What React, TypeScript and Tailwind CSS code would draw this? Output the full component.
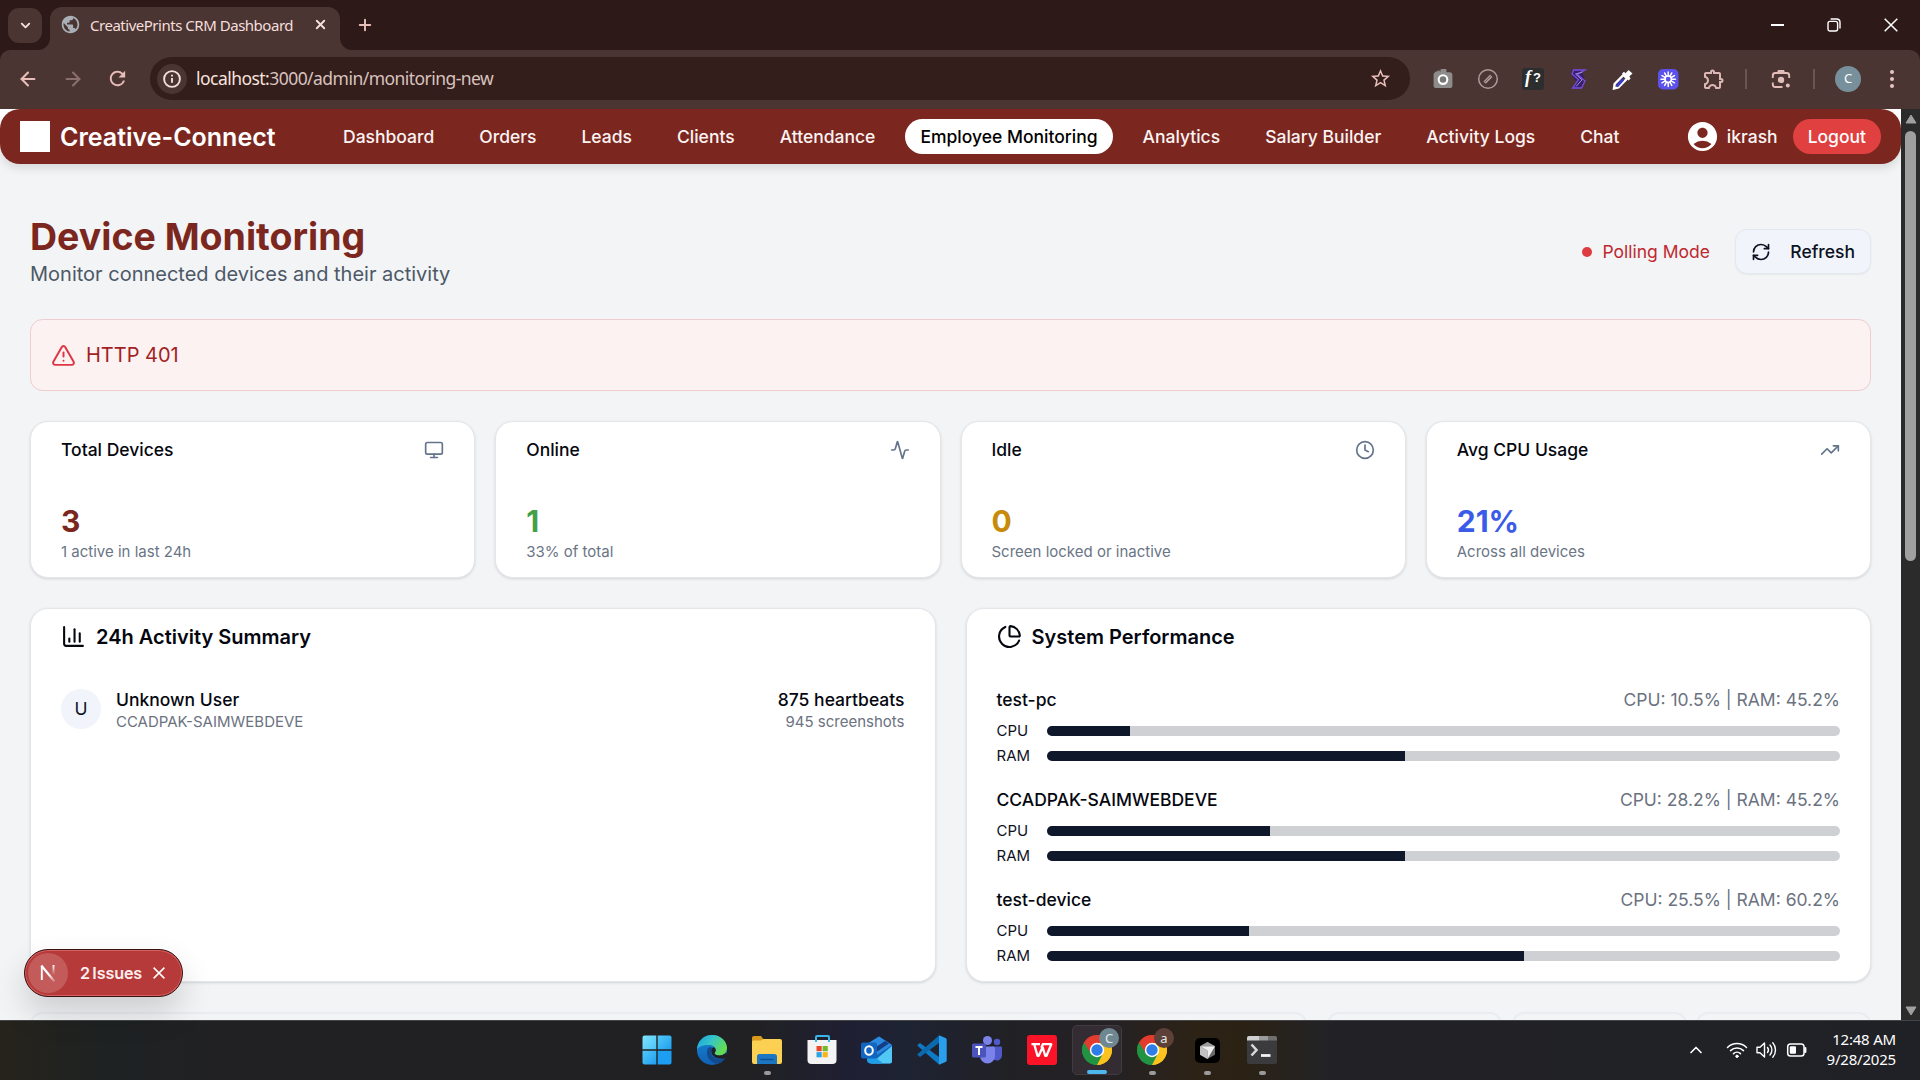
import React from "react";
import {
  Activity,
  ArrowLeft,
  ArrowRight,
  ChartColumn,
  ChartPie,
  ChevronDown,
  ChevronUp,
  Clock,
  Monitor,
  Plus,
  RefreshCw,
  TrendingUp,
  TriangleAlert,
  X,
} from "lucide-react";
import { MdAccountCircle, MdPublic, MdRefresh, MdStarBorder, MdOutlineExtension } from "react-icons/md";

const UI = "font-['Noto_Sans','Open_Sans',sans-serif]";

function TabStrip() {
  return (
    <div className="flex h-[50px] shrink-0 items-end bg-[#2d1a18]">
      <div className="mb-[7px] ml-2 flex h-[35px] w-[34px] items-center justify-center rounded-[11px] bg-[#4a3533]">
        <ChevronDown size={15} strokeWidth={3} className="text-[#f5dedb]" />
      </div>
      <div className="relative ml-2 flex h-[43px] w-[290px] items-center rounded-t-[12px] bg-[#4a3533] pb-[8px] pl-[10px] pr-[12px]">
        <svg className="absolute -left-3 bottom-0" width="12" height="12" viewBox="0 0 12 12">
          <path d="M12 0v12H0A12 12 0 0 0 12 0Z" fill="#4a3533" />
        </svg>
        <svg className="absolute -right-3 bottom-0" width="12" height="12" viewBox="0 0 12 12">
          <path d="M0 0v12h12A12 12 0 0 1 0 0Z" fill="#4a3533" />
        </svg>
        <MdPublic size={21} className="shrink-0 text-[#a9b0b5]" />
        <span className={`ml-[9px] flex-1 whitespace-nowrap pt-px text-[15px] tracking-[-0.48px] text-[#f5dedb] ${UI}`}>
          CreativePrints CRM Dashboard
        </span>
        <X size={15} strokeWidth={3} className="text-[#f5dedb]" />
      </div>
      <Plus size={18} strokeWidth={2.6} className="mb-4 ml-[16px] text-[#e7bdb8]" />
      <div className="mb-[18px] ml-auto mr-[22px] flex items-center gap-[43px]">
        <span className="h-[1.5px] w-[13px] bg-white" />
        <svg width="14" height="14" viewBox="0 0 14 14" fill="none" stroke="#fff" strokeWidth="1.4">
          <rect x="1" y="3.4" width="9.6" height="9.6" rx="2" />
          <path d="M3.6 1h6a3.4 3.4 0 0 1 3.4 3.4v6" />
        </svg>
        <svg width="14" height="14" viewBox="0 0 14 14" stroke="#fff" strokeWidth="1.5">
          <path d="M.7.7l12.6 12.6M13.3.7.7 13.3" />
        </svg>
      </div>
    </div>
  );
}

function Toolbar() {
  return (
    <div className="flex h-[59px] shrink-0 items-center bg-[#2d1a18]">
      <div className="flex h-full w-full items-center rounded-t-[10px] bg-[#4a3533] pb-[2px]">
        <ArrowLeft size={22} strokeWidth={2.3} className="ml-[17px] text-[#e7bdb8]" />
        <ArrowRight size={22} strokeWidth={2.3} className="ml-[23px] text-[#8b6f6c]" />
        <MdRefresh size={23} className="ml-[22px] text-[#e7bdb8]" />
        <div className="ml-[21px] flex h-[43px] w-[1260px] items-center rounded-full bg-[#331e1b] pl-[7px] pr-[18px]">
          <div className="flex size-[30px] items-center justify-center rounded-full bg-[#4a3533]">
            <svg width="18" height="18" viewBox="0 0 18 18" fill="none" stroke="#f5dedb" strokeWidth="1.9">
              <circle cx="9" cy="9" r="7.9" />
              <path d="M9 8v4.8M9 4.7v1.9" />
            </svg>
          </div>
          <span className={`ml-[9px] flex-1 text-[17.5px] tracking-[-0.54px] text-[#d9c2bf] ${UI}`}>
            <span className="text-[#f8e2df]">localhost:</span>3000/admin/monitoring-new
          </span>
          <MdStarBorder size={23} className="text-[#e7bdb8]" />
        </div>
        <Extensions />
      </div>
    </div>
  );
}

function Extensions() {
  const rays = Array.from({ length: 12 }, (_, i) => i * 30);
  return (
    <div className="ml-[22px] flex items-center">
      <div className="flex items-center gap-[23px]">
        <svg width="22" height="22" viewBox="0 0 22 22">
          <path d="M3.5 3.6h2v-1h2.2v1h.8V2a1 1 0 0 1 1-1h4a1 1 0 0 1 1 1v2.2H18A2.6 2.6 0 0 1 20.4 6.8V18A2 2 0 0 1 18.4 20H3.6A2 2 0 0 1 1.6 18V6Z" fill="#8e8c8b" />
          <circle cx="11" cy="11.600" r="4.300" fill="#777" stroke="#fff" strokeWidth="2.100" />
        </svg>
        <svg width="22" height="22" viewBox="0 0 22 22" fill="none">
          <circle cx="11" cy="11" r="9.300" stroke="#ab9a98" strokeWidth="1.500" />
          <path d="M7.600 14.600 14.300 7.700" stroke="#ab9a98" strokeWidth="3.400" />
          <path d="m8 14 5.800-6" stroke="#6b5654" strokeWidth=".9" />
        </svg>
        <span className="flex size-[22px] items-center justify-center rounded-[3px] bg-[#2c2d2f] pb-0.5 font-['Liberation_Serif',serif] text-[18px] font-bold italic text-white">
          f<span className="pl-0.5 font-['Liberation_Sans',sans-serif] text-[13px] not-italic">?</span>
        </span>
        <svg width="22" height="22" viewBox="0 0 22 22" fill="none">
          <path d="M4.500 1.500H18L15.500 5l2 6-3 9.500H4L9.500 14 4.500 7Z" fill="#35206b" />
          <path d="M18 2H6.500L5 6l6.500 5.500L5.500 20h9l3.500-7-7.500-6.500L18 2Z" stroke="#7a4ddb" strokeWidth="1.300" />
          <path d="M15.500 4 8.500 6l6.500 5.800-6 6.700" stroke="#a78be8" strokeWidth="1" />
        </svg>
        <svg width="22" height="22" viewBox="0 0 22 22" fill="none">
          <path d="m11.500 7 3.600 3.600L6.300 19.500 2 20.500 2.600 16Z" fill="#4a3533" stroke="#fff" strokeWidth="2.400" />
          <path d="m10.500 12-5 5.500" stroke="#3b3cc4" strokeWidth="3" strokeLinecap="round" />
          <path d="M10 5.500 12 3.800l1.600 1.400L16.500 2l4 3.600-3.200 3 1.300 1.800-2 2Z" fill="#fff" />
        </svg>
        <svg width="22" height="22" viewBox="0 0 22 22" stroke="#fff" strokeWidth="1.500">
          <rect x="1" y="1" width="20.500" height="20.500" rx="5" fill="#5c51ea" stroke="none" />
          {rays.map((a) => (
            <path key={a} d="M11.200 7.800V4" transform={`rotate(${a} 11.200 11.200)`} strokeLinecap="round" />
          ))}
          <circle cx="11.200" cy="11.200" r="3.200" fill="none" />
        </svg>
        <MdOutlineExtension size={24} className="text-[#dcb8b4]" />
      </div>
      <span className="ml-[19px] h-5 w-[2px] bg-[#6c5451]" />
      <svg className="ml-[23px]" width="22" height="22" viewBox="0 0 22 22" fill="none" stroke="#e3beb9" strokeWidth="1.900">
        <path d="M2.800 10V7.500a2.500 2.500 0 0 1 2.500-2.500h11.400a2.500 2.500 0 0 1 2.500 2.500V10M2.800 14.500v2A2.500 2.500 0 0 0 5.300 19H12.500" />
        <path d="M7 4.500 8 2h6l1 2.500Z" fill="#e3beb9" stroke="none" />
        <circle cx="11" cy="11.900" r="3.200" fill="#e3beb9" stroke="none" />
        <circle cx="17.800" cy="17.600" r="2" fill="#e3beb9" stroke="none" />
      </svg>
      <span className="ml-[21px] h-5 w-[2px] bg-[#6c5451]" />
      <span className={`ml-[20px] flex size-[26px] items-center justify-center rounded-full bg-[#78909c] text-[13px] text-white ${UI}`}>C</span>
      <span className="ml-[29px] flex flex-col gap-[3px]">
        <i className="size-[4px] rounded-full bg-[#e7c6c2]" />
        <i className="size-[4px] rounded-full bg-[#e7c6c2]" />
        <i className="size-[4px] rounded-full bg-[#e7c6c2]" />
      </span>
    </div>
  );
}

const NAV = ["Dashboard", "Orders", "Leads", "Clients", "Attendance", "Employee Monitoring", "Analytics", "Salary Builder", "Activity Logs", "Chat"];

function NavBar() {
  return (
    <div className="shrink-0 bg-gradient-to-b from-white from-30% to-transparent to-30%">
      <nav className="flex h-[55px] items-center rounded-[20px] bg-[#7b2720] pl-5 pr-5 text-[17.5px] font-medium text-white shadow-[0_5px_8px_rgba(0,0,0,0.1)]">
        <span className="h-[31px] w-[30px] bg-white" />
        <span className="ml-[10px] w-[216px] whitespace-nowrap pt-[2px] text-[25px] font-semibold">Creative-Connect</span>
        <div className="ml-[52px] flex gap-[15px]">
          {NAV.map((n) => (
            <span
              key={n}
              className={
                n === "Employee Monitoring"
                  ? "flex h-[35px] items-center whitespace-nowrap rounded-full bg-white px-[15px] pt-[2px] text-black"
                  : "flex h-[35px] items-center whitespace-nowrap px-[15px] pt-[2px] text-[#fbf3f2]"
              }
            >
              {n}
            </span>
          ))}
        </div>
        <MdAccountCircle size={35} className="-mr-0.5 ml-auto" />
        <span className="ml-[9px] pt-[2px] text-[#fbf3f2]">ikrash</span>
        <span className="ml-[15px] flex h-[35px] items-center rounded-full bg-[#e04040] px-[15px] pt-[2px]">Logout</span>
      </nav>
    </div>
  );
}

const STATS = [
  { title: "Total Devices", value: "3", note: "1 active in last 24h", Icon: Monitor, color: "text-[#7b2720]" },
  { title: "Online", value: "1", note: "33% of total", Icon: Activity, color: "text-[#43a047]" },
  { title: "Idle", value: "0", note: "Screen locked or inactive", Icon: Clock, color: "text-[#c88a0a]" },
  { title: "Avg CPU Usage", value: "21%", note: "Across all devices", Icon: TrendingUp, color: "text-[#3a5be8]" },
];

const CARD = "rounded-[18px] border border-[#e4e6ea] bg-white shadow-[0_1px_3px_rgba(0,0,0,0.13)]";

const DEVICES = [
  { name: "test-pc", cpu: 10.5, ram: 45.2 },
  { name: "CCADPAK-SAIMWEBDEVE", cpu: 28.2, ram: 45.2 },
  { name: "test-device", cpu: 25.5, ram: 60.2 },
];

function Meter({ label, value }: { label: string; value: number }) {
  return (
    <div className="flex h-5 items-center">
      <span className="w-[50px] pt-px text-[15px] text-[#10131f]">{label}</span>
      <div className="h-[10px] flex-1 overflow-hidden rounded-full bg-[#ced0d4]">
        <div className="h-full bg-[#0f172a]" style={{ width: `${value}%` }} />
      </div>
    </div>
  );
}

function Page() {
  return (
    <div className="flex min-w-0 flex-1 flex-col overflow-hidden bg-[#f2f4f6]">
      <NavBar />
      <main className="px-[30px] pt-[50px]">
        <div className="flex items-center justify-between">
          <div>
            <h1 className="text-[37.5px] font-bold leading-[45px] text-[#7b2720]">Device Monitoring</h1>
            <p className="text-[20px] leading-[30px] text-[#4d5866]">Monitor connected devices and their activity</p>
          </div>
          <div className="flex items-center">
            <span className="size-[10px] rounded-full bg-[#dd3c40]" />
            <span className="ml-[10px] pt-[2px] text-[17.5px] text-[#c0282f]">Polling Mode</span>
            <span className="ml-[25px] flex h-[45px] w-[136px] items-center justify-between rounded-[12px] border border-[#e3e8ef] bg-[#f1f5fb] px-[15px] text-[17.5px] font-medium text-[#0c1222] shadow-[0_1px_2px_rgba(0,0,0,0.05)]">
              <RefreshCw size={20} />
              <span className="pt-[2px]">Refresh</span>
            </span>
          </div>
        </div>

        <div className="mt-[30px] flex h-[72px] items-center rounded-[12.5px] border border-[#eecdd0] bg-[#fbf2f1] pl-5">
          <TriangleAlert size={25} strokeWidth={1.9} className="text-[#e03544]" />
          <span className="ml-[10px] text-[20px] text-[#a31f24]">HTTP 401</span>
        </div>

        <div className="mt-[30px] grid grid-cols-4 gap-5">
          {STATS.map(({ title, value, note, Icon, color }) => (
            <div key={title} className={`h-[157px] px-[30px] pt-[15px] ${CARD}`}>
              <div className="flex h-[25px] items-center justify-between">
                <span className="pt-[2px] text-[17.5px] font-medium text-[#05070f]">{title}</span>
                <Icon size={20} className="text-[#64748b]" />
              </div>
              <div className={`mt-[39px] text-[30px] font-bold leading-10 ${color}`}>{value}</div>
              <div className="mt-px text-[15px] leading-5 text-[#6a7585]">{note}</div>
            </div>
          ))}
        </div>

        <div className="mt-[30px] grid grid-cols-2 gap-[30px]">
          <section className={`h-[374px] px-[30px] pt-[15px] ${CARD}`}>
            <h2 className="flex h-[25px] items-center gap-[10px] text-[20px] font-semibold text-[#05070f]">
              <ChartColumn size={25} />
              24h Activity Summary
            </h2>
            <div className="mt-[37px] flex h-[45px] items-center">
              <span className="flex size-10 items-center justify-center rounded-full bg-[#f1f4fa] pt-[2px] text-[17.5px] text-[#0c1222]">U</span>
              <div className="ml-[15px] mt-[2px]">
                <div className="text-[17.5px] font-medium leading-[25px] text-[#05070f]">Unknown User</div>
                <div className="text-[15px] leading-5 text-[#6b7280]">CCADPAK-SAIMWEBDEVE</div>
              </div>
              <div className="ml-auto mt-[2px] text-right">
                <div className="text-[17.5px] font-medium leading-[25px] text-[#05070f]">875 heartbeats</div>
                <div className="text-[15px] leading-5 text-[#6b7280]">945 screenshots</div>
              </div>
            </div>
          </section>
          <section className={`h-[374px] px-[30px] pt-[15px] ${CARD}`}>
            <h2 className="flex h-[25px] items-center gap-[10px] text-[20px] font-semibold text-[#05070f]">
              <ChartPie size={25} />
              System Performance
            </h2>
            <div className="mt-[38px] flex flex-col gap-5">
              {DEVICES.map((d) => (
                <div key={d.name} className="flex h-20 flex-col">
                  <div className="mb-[9px] flex h-[25px] items-center justify-between pt-px text-[17.5px]">
                    <span className="font-medium text-[#05070f]">{d.name}</span>
                    <span className="text-[#6b7280]">
                      CPU: {d.cpu}% | RAM: {d.ram}%
                    </span>
                  </div>
                  <div className="flex flex-col gap-[5px]">
                    <Meter label="CPU" value={d.cpu} />
                    <Meter label="RAM" value={d.ram} />
                  </div>
                </div>
              ))}
            </div>
          </section>
        </div>

        <div className="mt-[30px] flex">
          <div className="h-[50px] w-[1277px] rounded-[12px] border-2 border-[#e9ecf0]" />
          <div className="ml-5 h-[50px] w-[175px] rounded-[12px] border-2 border-[#e9ecf0]" />
          <div className="ml-[10px] h-[50px] w-[175px] rounded-[12px] border-2 border-[#e9ecf0]" />
          <div className="ml-[9px] h-[50px] w-[175px] rounded-[12px] border-2 border-[#e9ecf0]" />
        </div>
      </main>
    </div>
  );
}

function ScrollBar() {
  return (
    <div className="flex w-[19px] shrink-0 flex-col items-center bg-[#2b2b2b]">
      <svg className="mt-[5px]" width="12" height="10" viewBox="0 0 12 10">
        <path d="M6 1 11 9H1Z" fill="#a0a0a0" stroke="#a0a0a0" strokeLinejoin="round" />
      </svg>
      <span className="mt-[7px] h-[430px] w-[11px] rounded-full bg-[#a0a0a0]" />
      <svg className="mb-[4px] mt-auto" width="12" height="10" viewBox="0 0 12 10">
        <path d="M6 9 1 1h10Z" fill="#a0a0a0" stroke="#a0a0a0" strokeLinejoin="round" />
      </svg>
    </div>
  );
}

function IssuesToast() {
  return (
    <div className="absolute left-6 top-[949px] flex h-[48px] w-[159px] items-center rounded-full border border-[#3a1214] bg-[#b53a39] pl-[3px] shadow-[inset_0_0_0_1px_#d4605f,0_16px_32px_rgba(0,0,0,0.16)]">
      <span className="flex size-[40px] items-center justify-center rounded-full bg-[#c25b5a]">
        <svg width="16" height="18" viewBox="0 0 16 18" fill="none">
          <defs>
            <linearGradient id="nd" x1="9" y1="10" x2="15" y2="17" gradientUnits="userSpaceOnUse">
              <stop stopColor="#fff" />
              <stop offset="1" stopColor="#fff" stopOpacity="0.2" />
            </linearGradient>
            <linearGradient id="nv" x1="13" y1="1" x2="13" y2="11" gradientUnits="userSpaceOnUse">
              <stop stopColor="#fff" />
              <stop offset="1" stopColor="#fff" stopOpacity="0" />
            </linearGradient>
          </defs>
          <path d="M1.800 16V2" stroke="#fff" strokeWidth="1.900" />
          <path d="M1.300 1.500 14.500 17.500" stroke="url(#nd)" strokeWidth="2.200" />
          <path d="M13.500 1v10" stroke="url(#nv)" strokeWidth="1.900" />
        </svg>
      </span>
      <span className="ml-[12px] w-[62px] whitespace-nowrap font-['Inter',sans-serif] text-[16.2px] font-semibold tracking-[-0.15px] text-[#fdeeee] [word-spacing:-1.5px]">2 Issues</span>
      <svg className="ml-[11px]" width="12" height="12" viewBox="0 0 12 12" stroke="#fff" strokeWidth="1.500">
        <path d="M.6.6l10.800 10.800M11.400.6.6 11.400" />
      </svg>
    </div>
  );
}

function ChromeIcon() {
  return (
    <svg width="30" height="30" viewBox="0 0 30 30">
      <path d="M15 15 2.010 7.500A15 15 0 0 1 27.990 7.500Z" fill="#e33b2e" />
      <path d="M15 15 27.990 7.500A15 15 0 0 1 15 30Z" fill="#fcc31e" />
      <path d="M15 15V30A15 15 0 0 1 2.010 7.500Z" fill="#229342" />
      <path d="M15 8h13.260A15 15 0 0 1 15 30l6-11.500Z" fill="#fcc31e" />
      <path d="M2.010 7.500 9 18.500 15 22l5.500-2.500L15 30A15 15 0 0 1 2.010 7.500Z" fill="#229342" />
      <path d="M2.010 7.500A15 15 0 0 1 28 7.900H15L9 18.500Z" fill="#e33b2e" />
      <circle cx="15" cy="15" r="7.200" fill="#fff" />
      <circle cx="15" cy="15" r="5.700" fill="#2f7de9" />
    </svg>
  );
}

function Chrome({ letter, tone }: { letter: string; tone: string }) {
  return (
    <span className="relative">
      <ChromeIcon />
      <span className={`absolute -right-[7px] -top-[7px] flex size-5 items-center justify-center rounded-full text-[13px] leading-none text-[#e3e7ea] ${tone} ${UI}`}>{letter}</span>
    </span>
  );
}

const APPS: { id: string; mark?: string; icon: React.ReactNode }[] = [
  {
    id: "start",
    icon: (
      <svg width="30" height="30" viewBox="0 0 30 30">
        <defs>
          <linearGradient id="win" x1="0" y1="0" x2="1" y2="1">
            <stop stopColor="#7fe3fb" />
            <stop offset="1" stopColor="#4cc4f6" />
          </linearGradient>
          <linearGradient id="win2" x1="0" y1="0" x2="1" y2="1">
            <stop stopColor="#52c8f7" />
            <stop offset="1" stopColor="#1f9ff0" />
          </linearGradient>
        </defs>
        <path d="M.5 2.500A2 2 0 0 1 2.500.5H14.300V14.300H.5Z" fill="url(#win)" />
        <path d="M15.700.5H27.500A2 2 0 0 1 29.500 2.500V14.300H15.700Z" fill="url(#win2)" />
        <path d="M.5 15.700H14.300V29.500H2.500A2 2 0 0 1 .5 27.500Z" fill="url(#win2)" />
        <path d="M15.700 15.700H29.500V27.500A2 2 0 0 1 27.500 29.500H15.700Z" fill="#1c9ff2" />
      </svg>
    ),
  },
  {
    id: "edge",
    icon: (
      <svg width="30" height="30" viewBox="0 0 30 30">
        <defs>
          <linearGradient id="ed1" x1="0" y1="0" x2="1" y2=".5">
            <stop stopColor="#1b9de2" />
            <stop offset=".5" stopColor="#35c6c8" />
            <stop offset="1" stopColor="#65dc50" />
          </linearGradient>
          <linearGradient id="ed2" x1="0" y1="0" x2="0" y2="1">
            <stop stopColor="#1685d4" />
            <stop offset="1" stopColor="#1261b4" />
          </linearGradient>
        </defs>
        <circle cx="15" cy="15" r="15" fill="url(#ed2)" />
        <path d="M0 15C0 6 7 0 15 0c9 0 15 6.500 15 13 0 4.500-3.500 7.500-7.500 7.500-3 0-5-1-5-2.200 0-.8 1.200-1.300 1.200-3.300 0-3-3-5-7-5C6 10 1 11.500 0 15Z" fill="url(#ed1)" />
        <path d="M11 13c-3 6 0 13 7 15.500 4 .8 8-1.500 10.500-5.500-5 2.500-14 1-14.500-6 0-2 .5-3.500 1.500-4.300-2-.9-3.600-.7-4.500.3Z" fill="#134b90" />
        <path d="M14.300 16c0-2 1-3.500 2.500-3.700 1.500.8 2 2 1.900 3.200-.2 1.500-1.200 2-1.200 2.800 0 1.200 2 2.200 5 2.200 2.500 0 4.600-1 6-2.500l2.500 1.500-1.500 3c-4 2.500-15.200 1.500-15.200-6.500Z" fill="#212123" />
      </svg>
    ),
  },
  {
    id: "explorer",
    mark: "bg-[#9a9a9c] w-[7px]",
    icon: (
      <svg width="30" height="30" viewBox="0 0 30 30">
        <path d="M0 3A2 2 0 0 1 2 1H9l3 4v7H0Z" fill="#d99a1c" />
        <path d="M0 7A1.500 1.500 0 0 1 1.500 5.500H9l2.500-1.500H28A2 2 0 0 1 30 6V27A2 2 0 0 1 28 29H2A2 2 0 0 1 0 27Z" fill="#fcd052" />
        <path d="M5 29V21.500A2.500 2.500 0 0 1 7.500 19H22.500A2.500 2.500 0 0 1 25 21.500V29Z" fill="#1b77c4" />
        <path d="M9 24.500h12" stroke="#0f518f" strokeWidth="1.600" strokeLinecap="round" />
      </svg>
    ),
  },
  {
    id: "store",
    icon: (
      <svg width="30" height="30" viewBox="0 0 30 30">
        <path d="M.5 5H29.500V25A4 4 0 0 1 25.500 29H4.500A4 4 0 0 1 .5 25Z" fill="#f3f3f3" />
        <path d="M9 7V2A1 1 0 0 1 10 1H21A1 1 0 0 1 22 2V7" fill="none" stroke="#38b6ea" strokeWidth="2" />
        <path d="M9.500 11h5.200v5.200H9.500Z" fill="#e8472b" />
        <path d="M15.600 11h5.200v5.200h-5.200Z" fill="#75b829" />
        <path d="M9.500 17.100h5.200v5.200H9.500Z" fill="#2ba4e4" />
        <path d="M15.600 17.100h5.200v5.200h-5.200Z" fill="#f7b51c" />
      </svg>
    ),
  },
  {
    id: "outlook",
    icon: (
      <svg width="32" height="30" viewBox="0 0 32 30">
        <path d="M6 9 18 1.500 31 10V26A2.500 2.500 0 0 1 28.500 28.500H10A4 4 0 0 1 6 24.500Z" fill="#1565bd" />
        <path d="M18 1.500 31 10 16 20 6 14V9Z" fill="#2b8ae0" />
        <path d="m12 14 12-8 4 2.500L14 18Z" fill="#123f86" />
        <path d="M31 11V26A2.500 2.500 0 0 1 28.500 28.500H10Z" fill="#52c9f5" />
        <path d="m6 16 15 11.500-1 1H10A4 4 0 0 1 6 24.500Z" fill="#1f9de8" />
        <rect x="0" y="7.500" width="16" height="16" rx="2" fill="#1066c0" />
        <ellipse cx="8" cy="15.500" rx="3.800" ry="4.300" fill="none" stroke="#fff" strokeWidth="2" />
      </svg>
    ),
  },
  {
    id: "vscode",
    icon: (
      <svg width="30" height="30" viewBox="0 0 30 30">
        <path d="M1 9.500 3 8 22 22v7.500L1.300 11.500A1.300 1.300 0 0 1 1 9.500Z" fill="#1079c4" />
        <path d="M1 20.500 3 22 22 8V.5L1.300 18.500A1.300 1.300 0 0 0 1 20.500Z" fill="#0b69ad" />
        <path d="M22 .3 28.500 3A2 2 0 0 1 29.700 5V25A2 2 0 0 1 28.500 27L22 29.700Z" fill="#2a9fec" />
      </svg>
    ),
  },
  {
    id: "teams",
    icon: (
      <svg width="30" height="30" viewBox="0 0 30 30">
        <circle cx="25" cy="7" r="3.200" fill="#5059c9" />
        <circle cx="15.500" cy="5.500" r="4.500" fill="#7b83eb" />
        <path d="M20 11.500h9a1 1 0 0 1 1 1v8a5 5 0 0 1-8 4Z" fill="#5059c9" />
        <path d="M8 11.500H21.500A1.500 1.500 0 0 1 23 13V21a7.500 7.500 0 0 1-15 0Z" fill="#7b83eb" />
        <rect x="0" y="8.500" width="14" height="14" rx="1.500" fill="#4b53bc" />
        <path d="M3.500 12h7M7 12v8" stroke="#fff" strokeWidth="2" />
      </svg>
    ),
  },
  {
    id: "wps",
    icon: (
      <svg width="30" height="30" viewBox="0 0 30 30">
        <rect x="0" y="0" width="30" height="30" rx="3" fill="#fb1428" />
        <path d="M4.500 9.200H13M7.300 9.500l3.200 11.300h1.200l3.900-8.600 2.700 8.600h1.200l4.800-11.600h-8.500l-1.500 3.500" fill="none" stroke="#fff" strokeWidth="2.300" strokeLinejoin="round" />
      </svg>
    ),
  },
  { id: "chrome-c", mark: "bg-[#4cb8f0] w-5", icon: <Chrome letter="C" tone="bg-[#6f8791]" /> },
  { id: "chrome-a", mark: "bg-[#9a9a9c] w-[7px]", icon: <Chrome letter="a" tone="bg-[#5d4037]" /> },
  {
    id: "cursor",
    mark: "bg-[#9a9a9c] w-[7px]",
    icon: (
      <svg width="25" height="25" viewBox="0 0 25 25">
        <rect width="25" height="25" rx="5" fill="#000" />
        <path d="m12.500 4 7.500 4.200v8.600L12.500 21 5 16.800V8.200Z" fill="#6a6a6a" />
        <path d="M5 8.200h15L12.500 21v-8.500Z" fill="#efefef" />
        <path d="m12.500 4 7.500 4.200H5Z" fill="#9c9c9c" />
        <path d="M12.500 12.500V21L5 16.800V8.200Z" fill="#c2c2c2" />
      </svg>
    ),
  },
  {
    id: "terminal",
    mark: "bg-[#9a9a9c] w-[7px]",
    icon: (
      <svg width="30" height="28" viewBox="0 0 30 28">
        <rect width="30" height="28" rx="2" fill="#3b3b3d" />
        <path d="M0 4.500V2A2 2 0 0 1 2 0H12V4.500Z" fill="#d0d0d0" />
        <path d="M12 0h9v4.500h-9Z" fill="#9b9b9b" />
        <path d="M21 0h7a2 2 0 0 1 2 2v2.500h-9Z" fill="#6f6f6f" />
        <path d="m4.500 8.500 5 5.500-5 5.500" fill="none" stroke="#d8d8d8" strokeWidth="2.600" />
        <path d="M14 19.500h9.500" stroke="#f2f2f2" strokeWidth="2.800" />
      </svg>
    ),
  },
];

function Taskbar() {
  return (
    <footer className="flex h-[60px] shrink-0 items-center border-t border-[#454547] bg-[linear-gradient(90deg,#26231c_0px,#1e2223_110px,#212123_220px,#212123_750px,#1f1f33_850px,#1e2333_905px,#212125_1010px,#252124_1110px,#2c2216_1195px,#2b2214_1240px,#222226_1330px,#202126_1920px)] pb-px text-white">
      <div className="ml-[632px] flex gap-[5px]">
        {APPS.map((a) => (
          <div
            key={a.id}
            className={
              a.id === "chrome-c"
                ? "relative flex h-[50px] w-[50px] items-center justify-center rounded-[5px] border border-[#423a41] bg-[#332c33]"
                : "relative flex h-[50px] w-[50px] items-center justify-center"
            }
          >
            {a.icon}
            {a.mark && <span className={`absolute bottom-0 h-[4px] rounded-full ${a.mark}`} />}
          </div>
        ))}
      </div>
      <div className="ml-auto flex items-center pr-6">
        <ChevronUp size={20} strokeWidth={2} />
        <svg className="ml-[20px]" width="22" height="18" viewBox="0 0 22 18" fill="none" stroke="#fff" strokeWidth="1.500" strokeLinecap="round">
          <path d="M1.500 6.500a13.500 13.500 0 0 1 19 0M4.500 9.600a9.300 9.300 0 0 1 13 0M7.500 12.600a5 5 0 0 1 7 0" />
          <circle cx="11" cy="15.300" r="1.200" fill="#fff" stroke="#fff" strokeWidth="1" />
        </svg>
        <svg className="ml-[8px]" width="22" height="18" viewBox="0 0 22 18" fill="none" stroke="#fff" strokeWidth="1.400" strokeLinecap="round" strokeLinejoin="round">
          <path d="M1 6.300h3L8.500 2v14L4 11.700H1ZM11.500 6.500a4 4 0 0 1 0 5M14 4a7.500 7.500 0 0 1 0 10M16.800 1.800a11 11 0 0 1 0 14.400" />
        </svg>
        <svg className="ml-[8px]" width="22" height="14" viewBox="0 0 22 14" fill="none">
          <rect x="1.700" y="1" width="16.300" height="12" rx="2.800" stroke="#fff" strokeWidth="1.500" />
          <rect x="3.800" y="3.200" width="6.200" height="7.600" rx="1" fill="#fff" />
          <path d="M19.300 5v4" stroke="#fff" strokeWidth="2.200" strokeLinecap="round" />
        </svg>
        <div className={`ml-[17px] w-[71px] whitespace-nowrap pb-[3px] text-[15px] leading-5 tracking-[-0.2px] ${UI}`}>
          <div className="flex justify-end">12:48 AM</div>
          <div className="flex justify-end">9/28/2025</div>
        </div>
      </div>
    </footer>
  );
}

export default function App() {
  return (
    <div className="relative flex h-[1080px] w-[1920px] flex-col overflow-hidden font-['Inter',sans-serif]">
      <TabStrip />
      <Toolbar />
      <div className="flex h-[911px] shrink-0">
        <Page />
        <ScrollBar />
      </div>
      <Taskbar />
      <IssuesToast />
    </div>
  );
}
